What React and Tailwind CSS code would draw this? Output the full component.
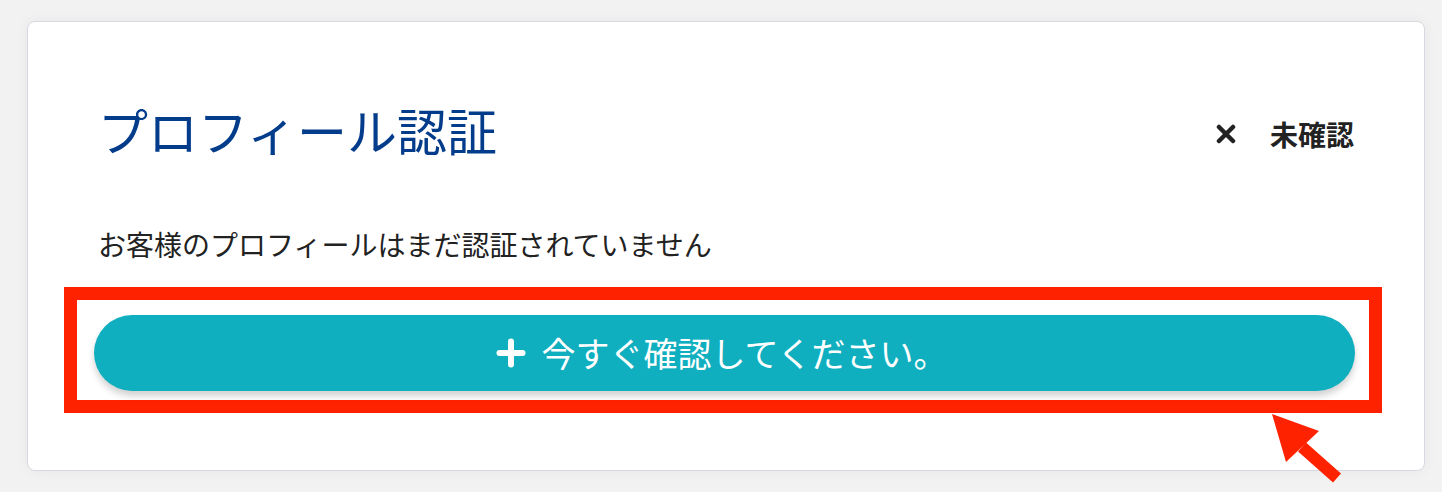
function CloseMark() {
    return (
        <svg width="20" height="20" viewBox="0 0 20 20" className="shrink-0">
            <path d="M3 3L17 17M17 3L3 17" stroke="#222" strokeWidth="4.5" strokeLinecap="round" />
        </svg>
    );
}

function PlusMark() {
    return (
        <svg width="30" height="30" viewBox="0 0 30 30" className="shrink-0">
            <path d="M15 3.5V26.5M3.5 15H26.5" stroke="#fff" strokeWidth="6" strokeLinecap="round" />
        </svg>
    );
}

function PointerArrow() {
    return (
        <svg
            width="82"
            height="80"
            viewBox="0 0 82 80"
            className="absolute left-[1234px] top-[383px] pointer-events-none"
        >
            <path d="M40 42L75 73" stroke="#ff2200" strokeWidth="12" />
            <polygon points="10,9 57,26 24,57" fill="#ff2200" />
        </svg>
    );
}

export default function App() {
    return (
        <div
            className="min-h-[492px] bg-[#f2f2f2] pt-[21px] pl-[27px]"
            style={{ fontFamily: '"Noto Sans CJK JP", "Noto Sans", sans-serif' }}
        >
            <div className="relative w-[1398px] h-[450px] bg-white border border-[#d6d9e0] rounded-[8px] shadow-[0_0_14px_rgba(0,0,0,0.05)] pl-[70px] pr-[70px] pt-[82px]">
                {/* Header */}
                <div className="flex items-center justify-between">
                    <h1 className="text-[50px] leading-[50px] text-[#033c8a] font-normal">プロフィール認証</h1>
                    <div className="flex items-center gap-[34px] mt-[9px]">
                        <CloseMark />
                        <span className="text-[28px] leading-[28px] font-bold text-[#222]">未確認</span>
                    </div>
                </div>

                <p className="mt-[76px] text-[28px] leading-[28px] text-[#222]">
                    お客様のプロフィールはまだ認証されていません
                </p>

                {/* Highlighted action */}
                <div className="mt-[29px] ml-[-34px] mr-[-28px] border-[13px] border-[#ff2200] pl-[17px] pr-[14px] pt-[15px] pb-[9px]">
                    <button className="w-full h-[76px] rounded-full bg-[#0fafbf] shadow-[0_5px_7px_rgba(0,0,0,0.18)] flex items-center justify-center gap-[16px] text-white">
                        <PlusMark />
                        <span className="text-[34px] leading-[34px] font-normal mr-[6px]">今すぐ確認してください。</span>
                    </button>
                </div>

                <PointerArrow />
            </div>
        </div>
    );
}
